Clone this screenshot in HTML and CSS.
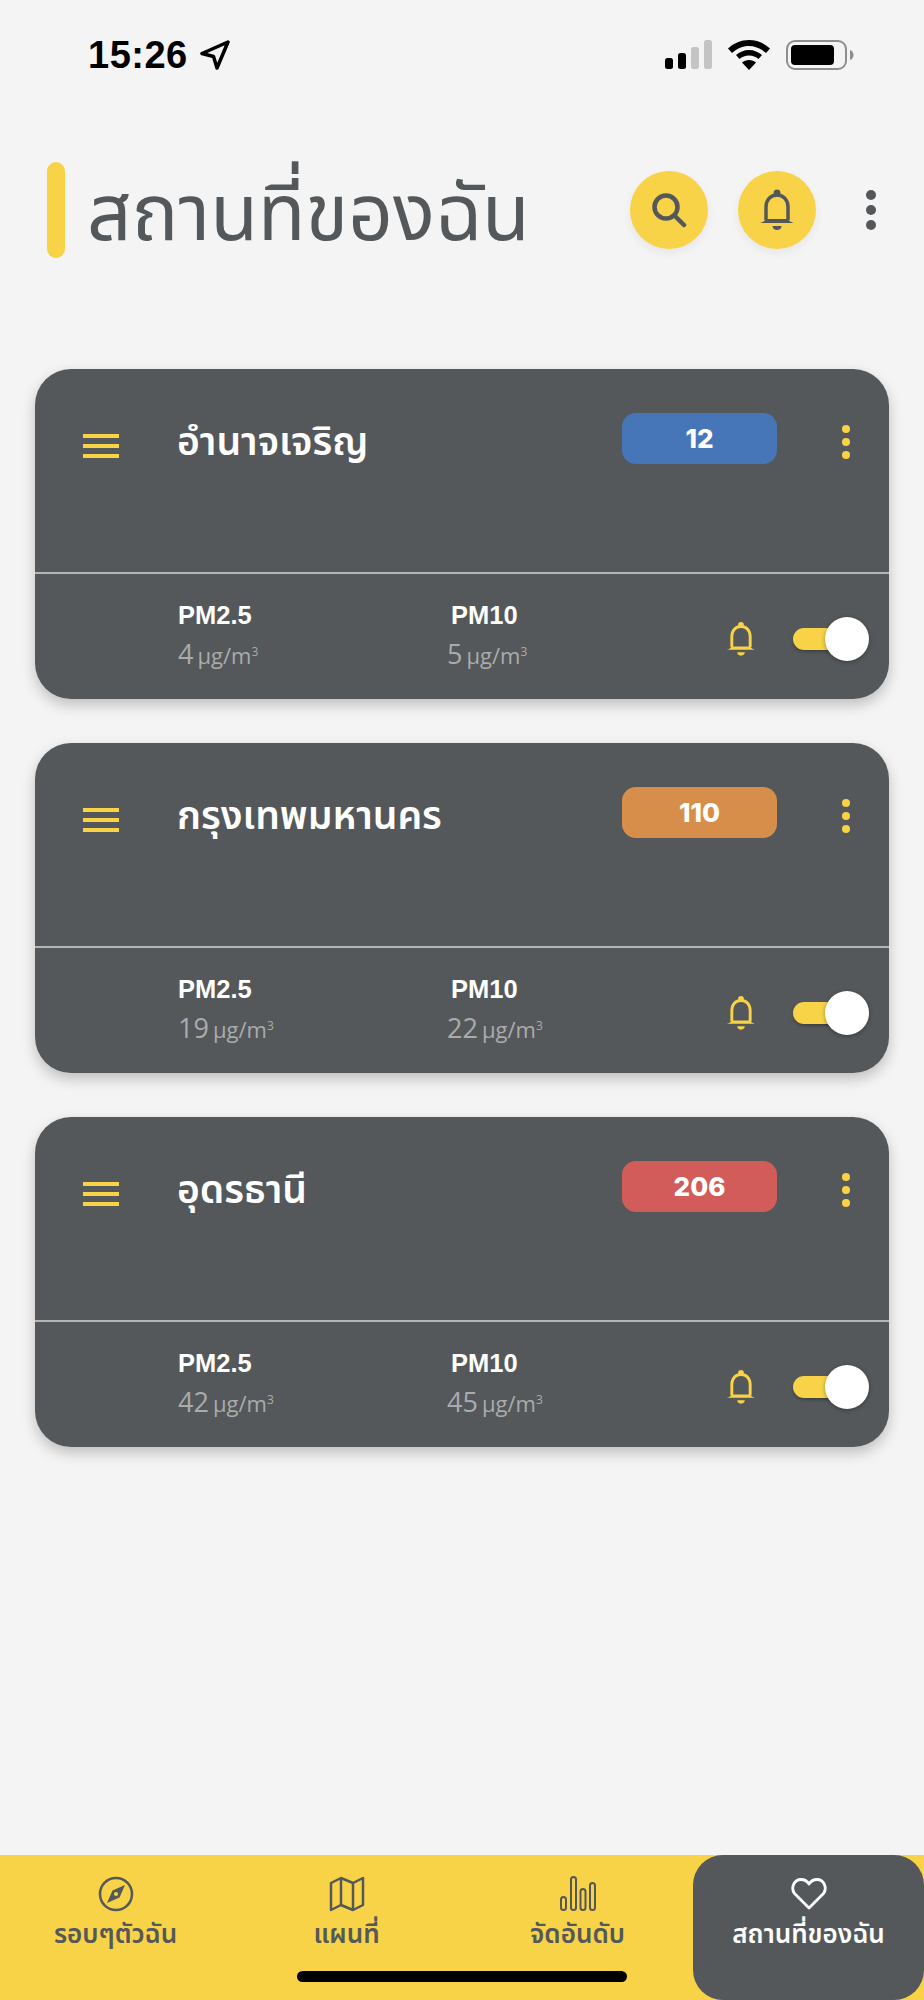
FILE: index.html
```html
<!DOCTYPE html>
<html>
<head>
    <meta charset="UTF-8">
    <meta name="viewport" content="width=device-width, initial-scale=1.0">
    <title>สถานที่ของฉัน</title>
    <link rel="stylesheet" href="styles.css">
</head>
<body>
    <div class="page">
        <!-- Status bar -->
        <div class="status-bar">
            <div class="status-left">
                <span class="time">15:26</span>
                <svg class="arrow" width="30" height="30" viewBox="0 0 30 30"><path d="M28 2 2 13.500l11.500 3 3.500 11.500z" fill="none" stroke="#000" stroke-width="3.500" stroke-linejoin="round"/></svg>
            </div>
            <div class="status-right">
                <svg width="47" height="30" viewBox="0 0 47 30"><rect x="0" y="18" width="8" height="11" rx="2.500"/><rect x="13" y="13" width="8" height="16" rx="2.500"/><rect x="26" y="7" width="8" height="22" rx="2.500" fill="#c4c4c4"/><rect x="39" y="0" width="8" height="29" rx="2.500" fill="#c4c4c4"/></svg>
                <svg width="42" height="30" viewBox="0 0 42 30"><path d="M21 0C13 0 6 3 0 8.500l4 4.500C9 8.500 15 6 21 6s12 2.500 17 7l4-4.500C36 3 29 0 21 0z"/><path d="M21 10c-5 0-9.500 2-13 5l3.500 4c2.500-2.200 5.800-3.500 9.500-3.500s7 1.300 9.500 3.500l3.500-4c-3.500-3-8-5-13-5z"/><path d="M21 20c-2.700 0-5 1-7 2.500l7 7.500 7-7.500C26 21 23.700 20 21 20z"/></svg>
                <svg width="68" height="30" viewBox="0 0 68 30"><rect x="1" y="1" width="59" height="28" rx="8" fill="none" stroke="#8e8e8e" stroke-width="2"/><rect x="5" y="5" width="43" height="20" rx="4"/><path d="M64 10c2.500.8 3.500 2.800 3.500 5s-1 4.200-3.500 5z" fill="#8e8e8e"/></svg>
            </div>
        </div>

        <!-- Header -->
        <div class="header">
            <div class="header-mark"></div>
            <h1 class="header-title">สถานที่ของฉัน</h1>
            <button class="round-btn">
                <svg width="36" height="36" viewBox="0 0 36 36" fill="none" stroke="#54585a" stroke-width="4.500" stroke-linecap="round"><circle cx="15" cy="15" r="11.500"/><path d="M24 24l9 9"/></svg>
            </button>
            <button class="round-btn">
                <svg width="36" height="42" viewBox="0 0 36 42"><use href="#bell" color="#54585a"/></svg>
            </button>
            <div class="dots dots-header"><i></i><i></i><i></i></div>
        </div>

        <!-- Places -->
        <div class="cards">
            <div class="card">
                <div class="card-top">
                    <div class="menu-icon"><i></i><i></i><i></i></div>
                    <div class="place-name">อำนาจเจริญ</div>
                    <div class="aqi aqi-blue">12</div>
                    <div class="dots"><i></i><i></i><i></i></div>
                </div>
                <div class="card-bottom">
                    <div class="reading">
                        <div class="reading-label">PM2.5</div>
                        <div class="reading-value">4 <span class="unit">µg/m<sup>3</sup></span></div>
                    </div>
                    <div class="reading">
                        <div class="reading-label">PM10</div>
                        <div class="reading-value">5 <span class="unit">µg/m<sup>3</sup></span></div>
                    </div>
                    <svg class="card-bell" width="30" height="36" viewBox="0 0 36 42"><use href="#bell" color="#f8d247"/></svg>
                    <div class="toggle"><div class="toggle-knob"></div></div>
                </div>
            </div>
            <div class="card">
                <div class="card-top">
                    <div class="menu-icon"><i></i><i></i><i></i></div>
                    <div class="place-name">กรุงเทพมหานคร</div>
                    <div class="aqi aqi-orange">110</div>
                    <div class="dots"><i></i><i></i><i></i></div>
                </div>
                <div class="card-bottom">
                    <div class="reading">
                        <div class="reading-label">PM2.5</div>
                        <div class="reading-value">19 <span class="unit">µg/m<sup>3</sup></span></div>
                    </div>
                    <div class="reading">
                        <div class="reading-label">PM10</div>
                        <div class="reading-value">22 <span class="unit">µg/m<sup>3</sup></span></div>
                    </div>
                    <svg class="card-bell" width="30" height="36" viewBox="0 0 36 42"><use href="#bell" color="#f8d247"/></svg>
                    <div class="toggle"><div class="toggle-knob"></div></div>
                </div>
            </div>
            <div class="card">
                <div class="card-top">
                    <div class="menu-icon"><i></i><i></i><i></i></div>
                    <div class="place-name">อุดรธานี</div>
                    <div class="aqi aqi-red">206</div>
                    <div class="dots"><i></i><i></i><i></i></div>
                </div>
                <div class="card-bottom">
                    <div class="reading">
                        <div class="reading-label">PM2.5</div>
                        <div class="reading-value">42 <span class="unit">µg/m<sup>3</sup></span></div>
                    </div>
                    <div class="reading">
                        <div class="reading-label">PM10</div>
                        <div class="reading-value">45 <span class="unit">µg/m<sup>3</sup></span></div>
                    </div>
                    <svg class="card-bell" width="30" height="36" viewBox="0 0 36 42"><use href="#bell" color="#f8d247"/></svg>
                    <div class="toggle"><div class="toggle-knob"></div></div>
                </div>
            </div>
        </div>

        <!-- Bottom tabs -->
        <div class="tabs">
            <div class="tab">
                <svg width="36" height="36" viewBox="0 0 36 36"><circle cx="18" cy="18" r="16" fill="none" stroke="#54585a" stroke-width="2.500"/><path d="M27 9 21.500 21.500 9 27l5.500-12.500z" fill="#54585a"/><circle cx="18" cy="18" r="2" fill="#f8d247"/></svg>
                <span>รอบๆตัวฉัน</span>
            </div>
            <div class="tab">
                <svg width="36" height="36" viewBox="0 0 36 36" fill="none" stroke="#54585a" stroke-width="2.500" stroke-linejoin="round"><path d="M2 7 12 2l12 5 10-5v27l-10 5-12-5-10 5z"/><path d="M12 2v27M24 7v27"/></svg>
                <span>แผนที่</span>
            </div>
            <div class="tab">
                <svg width="36" height="36" viewBox="0 0 36 36" fill="none" stroke="#54585a" stroke-width="2"><rect x="1" y="21" width="5" height="13" rx="2.500"/><rect x="11" y="1" width="5" height="33" rx="2.500"/><rect x="20.500" y="13" width="5" height="21" rx="2.500"/><rect x="30" y="7" width="5" height="27" rx="2.500"/></svg>
                <span>จัดอันดับ</span>
            </div>
            <div class="tab tab-active">
                <svg width="36" height="36" viewBox="0 0 36 36"><path d="M18 32 3.500 17.500C-.500 12 3 3.500 10 3.500c3.500 0 6.300 1.800 8 4.500 1.700-2.700 4.500-4.500 8-4.500 7 0 10.500 8.500 6.500 14z" fill="none" stroke="#fff" stroke-width="2.800" stroke-linejoin="round"/></svg>
                <span>สถานที่ของฉัน</span>
            </div>
            <div class="home-bar"></div>
        </div>
    </div>

    <svg class="defs" width="0" height="0">
        <symbol id="bell" viewBox="0 0 36 42">
            <circle cx="18" cy="4" r="3.500" fill="currentColor"/>
            <path d="M7 31V18C7 11 11.500 6 18 6s11 5 11 12v13" fill="none" stroke="currentColor" stroke-width="3.500"/>
            <path d="M1 34c3-1 5-2 6-4h22c1 2 3 3 6 4z" fill="currentColor"/>
            <path d="M13.500 37h9c0 2.500-2 4-4.500 4s-4.500-1.500-4.500-4z" fill="currentColor"/>
        </symbol>
    </svg>
</body>
</html>
```
FILE: styles.css
```css
body {
    margin: 0;
    padding: 0;
    background-color: #f4f4f4;
    font-family: "Noto Sans", "Noto Sans Thai", "Liberation Sans", sans-serif;
}
.page {
    width: 924px;
    height: 2000px;
    display: flex;
    flex-direction: column;
    overflow: hidden;
}
.defs {
    position: absolute;
}
/* Status bar */
.status-bar {
    height: 30px;
    padding: 40px 70px 0 88px;
    display: flex;
    justify-content: space-between;
    align-items: center;
}
.status-left {
    display: flex;
    align-items: center;
    gap: 12px;
}
.time {
    font-family: "Liberation Sans", sans-serif;
    font-size: 38px;
    font-weight: bold;
    letter-spacing: 0.5px;
    color: #000;
}
.status-right {
    display: flex;
    align-items: center;
    gap: 16px;
}
/* Header */
.header {
    height: 96px;
    margin-top: 92px;
    padding: 0 48px 0 47px;
    display: flex;
    align-items: center;
}
.header-mark {
    width: 18px;
    height: 96px;
    border-radius: 9px;
    background-color: #f8d247;
}
.header-title {
    flex: 1;
    margin: 0 0 0 22px;
    font-size: 78px;
    line-height: 96px;
    font-weight: normal;
    color: #54585a;
}
.round-btn {
    width: 78px;
    height: 78px;
    margin-right: 30px;
    padding: 0;
    border: none;
    border-radius: 50%;
    background-color: #f8d247;
    box-shadow: 0 4px 10px rgba(0, 0, 0, 0.06);
    display: flex;
    align-items: center;
    justify-content: center;
}
.dots {
    width: 8px;
    display: flex;
    flex-direction: column;
    gap: 5px;
}
.dots i {
    width: 8px;
    height: 8px;
    border-radius: 50%;
    background-color: #f8d247;
}
.dots-header {
    width: 10px;
    margin-left: 20px;
}
.dots-header i {
    width: 10px;
    height: 10px;
    background-color: #54585a;
}
/* Cards */
.cards {
    margin-top: 111px;
    padding: 0 35px;
    display: flex;
    flex-direction: column;
    gap: 44px;
}
.card {
    height: 330px;
    border-radius: 36px;
    background-color: #54585a;
    box-shadow: 0 6px 14px rgba(0, 0, 0, 0.22);
    display: flex;
    flex-direction: column;
}
.card-top {
    height: 205px;
    padding: 44px 39px 0 48px;
    box-sizing: border-box;
    border-bottom: 2px solid #b3b5b6;
    display: flex;
    align-items: flex-start;
}
.menu-icon {
    width: 36px;
    margin-top: 21px;
    display: flex;
    flex-direction: column;
    gap: 6px;
}
.menu-icon i {
    height: 4px;
    background-color: #f8d247;
}
.place-name {
    flex: 1;
    margin-left: 58px;
    margin-top: 2px;
    font-size: 39px;
    line-height: 50px;
    font-weight: 600;
    color: #fff;
}
.aqi {
    width: 155px;
    height: 51px;
    border-radius: 14px;
    font-family: "Inter", sans-serif;
    font-size: 26px;
    font-weight: 800;
    line-height: 51px;
    text-align: center;
    color: #fff;
}
.aqi-blue {
    background-color: #4776b8;
}
.aqi-orange {
    background-color: #d88e4b;
}
.aqi-red {
    background-color: #d25c59;
}
.card-top .dots {
    margin-left: 65px;
    margin-top: 12px;
}
.card-bottom {
    flex: 1;
    padding: 0 24px 0 143px;
    display: flex;
    align-items: center;
}
.reading {
    width: 273px;
}
.reading-label {
    font-family: "Liberation Sans", sans-serif;
    font-size: 25.5px;
    font-weight: bold;
    color: #fff;
}
.reading-value {
    margin-top: 5px;
    font-family: "Open Sans", sans-serif;
    font-size: 27px;
    line-height: 34px;
    word-spacing: -3px;
    color: #a9abac;
}
.reading + .reading .reading-value {
    margin-left: -4px;
}
.unit {
    font-size: 22px;
}
.unit sup {
    font-size: 12px;
}
.card-bell {
    margin-left: auto;
    margin-top: 5px;
}
.toggle {
    width: 72px;
    height: 22px;
    margin-left: 37px;
    margin-top: 5px;
    border-radius: 11px;
    background-color: #f8d247;
    box-shadow: 0 2px 3px rgba(0, 0, 0, 0.25);
    position: relative;
}
.toggle-knob {
    position: absolute;
    right: -4px;
    top: -11px;
    width: 44px;
    height: 44px;
    border-radius: 50%;
    background-color: #fff;
    box-shadow: 0 1px 4px rgba(0, 0, 0, 0.35);
}
/* Bottom tabs */
.tabs {
    margin-top: auto;
    height: 145px;
    background-color: #f8d247;
    display: flex;
    position: relative;
}
.tab {
    width: 231px;
    padding-top: 21px;
    box-sizing: border-box;
    display: flex;
    flex-direction: column;
    align-items: center;
    font-size: 26px;
    font-weight: 600;
    color: #54585a;
}
.tab span {
    margin-top: 3px;
}
.tab-active {
    border-radius: 30px;
    background-color: #54585a;
    color: #fff;
}
.home-bar {
    position: absolute;
    left: 297px;
    bottom: 18px;
    width: 330px;
    height: 11px;
    border-radius: 6px;
    background-color: #000;
}
```
